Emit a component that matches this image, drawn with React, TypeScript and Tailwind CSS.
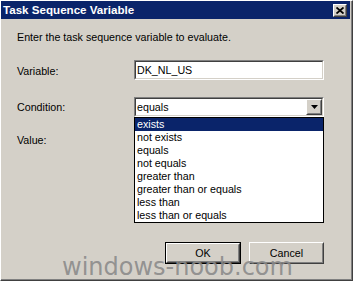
const options = [
  "exists",
  "not exists",
  "equals",
  "not equals",
  "greater than",
  "greater than or equals",
  "less than",
  "less than or equals",
]

const Sunken = ({ className, children }: { className?: string; children?: React.ReactNode }) => (
  <div className={`border border-t-[#808080] border-l-[#808080] border-b-white border-r-white ${className ?? ""}`}>
    <div className="h-full w-full border border-t-[#404040] border-l-[#404040] border-b-[#d4d0c8] border-r-[#d4d0c8] bg-white">
      {children}
    </div>
  </div>
)

const Raised = ({ className, children }: { className?: string; children?: React.ReactNode }) => (
  <div className={`border border-t-white border-l-white border-b-[#404040] border-r-[#404040] ${className ?? ""}`}>
    <div className="flex h-full w-full items-center justify-center border border-t-[#d4d0c8] border-l-[#d4d0c8] border-b-[#808080] border-r-[#808080] bg-[#d4d0c8]">
      {children}
    </div>
  </div>
)

export default function App() {
  return (
    <div className="relative h-[281px] w-[353px] overflow-hidden border-l border-t border-l-white border-t-white border-r border-b border-r-[#404040] border-b-[#404040] bg-[#d4d0c8] font-['Liberation_Sans',sans-serif] text-[10.7px] text-black">
      <div className="flex h-full flex-col border-r border-b border-r-[#808080] border-b-[#808080] pr-[1px]">
        {/* title bar */}
        <div className="flex h-[18px] items-center justify-between bg-[#0a246a] pl-[2px] pr-[3px]">
          <span className="text-[11.6px] font-bold text-white">Task Sequence Variable</span>
          <Raised className="h-[13px] w-[14px]">
            <svg width="8" height="7" viewBox="0 0 8 7">
              <path d="M0.5 0.5 L7.5 6.5 M7.5 0.5 L0.5 6.5" stroke="black" strokeWidth="1.8" />
            </svg>
          </Raised>
        </div>

        {/* content */}
        <div className="flex-1 pl-[16px]">
          <p className="mt-[12px] leading-[13px]">Enter the task sequence variable to evaluate.</p>

          <div className="mt-[16px] flex h-[20px] w-[307px] items-center">
            <span className="w-[117px] pt-[2px]">Variable:</span>
            <Sunken className="h-[20px] w-[190px]">
              <div className="flex h-full items-center pl-[1px]">DK_NL_US</div>
            </Sunken>
          </div>

          <div className="mt-[17px] flex h-[20px] w-[307px] items-center">
            <span className="w-[117px] pt-[1px]">Condition:</span>
            <div className="relative">
              <Sunken className="h-[20px] w-[190px]">
                <div className="flex h-full items-center justify-between">
                  <span className="pl-[1px]">equals</span>
                  <Raised className="h-[16px] w-[16px]">
                    <svg width="7" height="4" viewBox="0 0 7 4">
                      <path d="M0 0 H7 L3.5 4 Z" fill="black" />
                    </svg>
                  </Raised>
                </div>
              </Sunken>
              <ul className="absolute left-0 top-[20px] z-10 w-[190px] border border-black bg-white">
                {options.map((o, i) => (
                  <li
                    key={o}
                    className={`h-[13px] pl-[2px] leading-[13px] ${i === 0 ? "bg-[#0a246a] text-white" : ""}`}
                  >
                    {o}
                  </li>
                ))}
              </ul>
            </div>
          </div>

          <p className="mt-[17px] leading-[13px]">Value:</p>

          <div className="mt-[95px] flex w-[307px] justify-end gap-[8px]">
            <div className="h-[22px] w-[76px] border border-black">
              <Raised className="h-full w-full">OK</Raised>
            </div>
            <Raised className="h-[22px] w-[75px]">Cancel</Raised>
          </div>
        </div>
      </div>

      {/* watermark */}
      <div className="pointer-events-none absolute left-[61px] top-[254px] z-20 font-['DejaVu_Sans',sans-serif] text-[24px] leading-none text-[#8a8a8a]/90">
        windows-noob.com
      </div>
    </div>
  )
}
